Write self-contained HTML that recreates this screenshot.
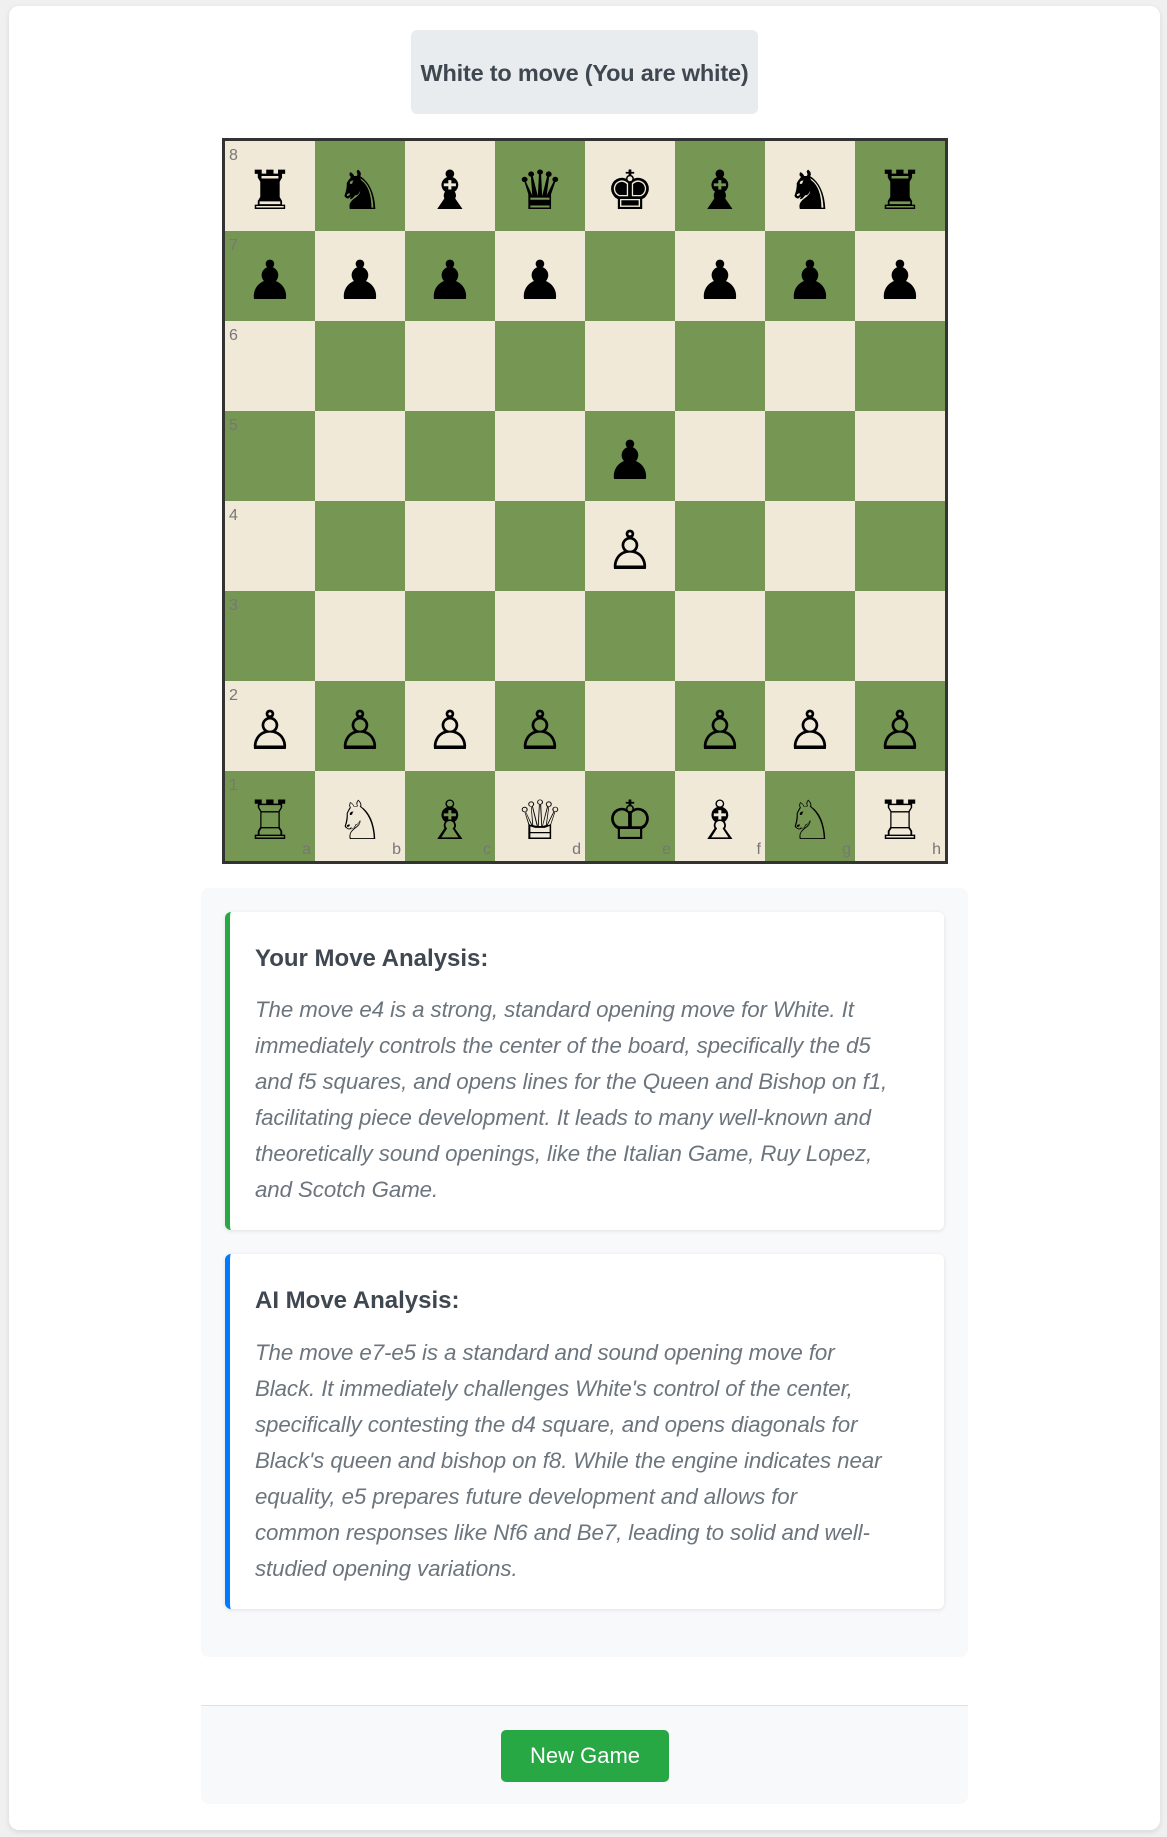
<!DOCTYPE html>
<html><head><meta charset="utf-8"><style>
*{box-sizing:border-box;margin:0;padding:0}
body{width:1167px;height:1837px;background:#f0f0f0;font-family:"Liberation Sans",sans-serif;position:relative;overflow:hidden}
.outer{position:absolute;left:9px;top:6px;width:1151px;height:1824px;background:#fff;border-radius:10px;box-shadow:0 2px 6px rgba(0,0,0,.1)}
.status{position:absolute;left:411px;top:30px;width:347px;height:84px;background:#e9ecef;border-radius:6px;color:#3f4750;font-weight:bold;font-size:23.5px;line-height:86px;text-align:center;white-space:nowrap;letter-spacing:-0.2px}
.board{position:absolute;left:222px;top:138px;width:726px;height:726px;border:3px solid #333;display:grid;grid-template-columns:repeat(8,90px);grid-template-rows:repeat(8,90px)}
.sq{position:relative;font-family:"DejaVu Sans",sans-serif;font-size:54px;line-height:100px;text-align:center;color:#000}
.l{background:#f0e9d8}.d{background:#769654}
.r{position:absolute;left:4px;top:6px;font-family:"Liberation Sans",sans-serif;font-size:16px;line-height:18px;color:#777}
.f{position:absolute;right:4px;bottom:2px;font-family:"Liberation Sans",sans-serif;font-size:16px;line-height:18px;color:#777}
.sec{position:absolute;left:201px;top:888px;width:767px;height:769px;background:#f8f9fa;border-radius:8px}
.card{position:absolute;left:225px;width:719px;background:#fff;border-radius:6px;box-shadow:0 1px 4px rgba(0,0,0,.1)}
.card h3{position:absolute;left:25px;font-size:24px;color:#3f4750;font-weight:bold}
.card p{position:absolute;left:25px;font-style:italic;font-size:22.3px;line-height:36px;color:#6c757d;white-space:nowrap;letter-spacing:-0.1px}
.foot{position:absolute;left:201px;top:1705px;width:767px;height:99px;background:#f8f9fa;border-top:1px solid #dee2e6;border-radius:0 0 8px 8px}
.btn{position:absolute;left:501px;top:1730px;width:168px;height:52px;background:#28a745;border-radius:5px;color:#fff;font-size:22px;line-height:52px;text-align:center}
</style></head><body>
<div class="outer"></div>
<div class="status">White to move (You are white)</div>
<div class="board">
<div class="sq l">♜<span class="r">8</span></div><div class="sq d">♞</div><div class="sq l">♝</div><div class="sq d">♛</div><div class="sq l">♚</div><div class="sq d">♝</div><div class="sq l">♞</div><div class="sq d">♜</div>
<div class="sq d">♟<span class="r">7</span></div><div class="sq l">♟</div><div class="sq d">♟</div><div class="sq l">♟</div><div class="sq d"></div><div class="sq l">♟</div><div class="sq d">♟</div><div class="sq l">♟</div>
<div class="sq l"><span class="r">6</span></div><div class="sq d"></div><div class="sq l"></div><div class="sq d"></div><div class="sq l"></div><div class="sq d"></div><div class="sq l"></div><div class="sq d"></div>
<div class="sq d"><span class="r">5</span></div><div class="sq l"></div><div class="sq d"></div><div class="sq l"></div><div class="sq d">♟</div><div class="sq l"></div><div class="sq d"></div><div class="sq l"></div>
<div class="sq l"><span class="r">4</span></div><div class="sq d"></div><div class="sq l"></div><div class="sq d"></div><div class="sq l">♙</div><div class="sq d"></div><div class="sq l"></div><div class="sq d"></div>
<div class="sq d"><span class="r">3</span></div><div class="sq l"></div><div class="sq d"></div><div class="sq l"></div><div class="sq d"></div><div class="sq l"></div><div class="sq d"></div><div class="sq l"></div>
<div class="sq l">♙<span class="r">2</span></div><div class="sq d">♙</div><div class="sq l">♙</div><div class="sq d">♙</div><div class="sq l"></div><div class="sq d">♙</div><div class="sq l">♙</div><div class="sq d">♙</div>
<div class="sq d">♖<span class="r">1</span><span class="f">a</span></div><div class="sq l">♘<span class="f">b</span></div><div class="sq d">♗<span class="f">c</span></div><div class="sq l">♕<span class="f">d</span></div><div class="sq d">♔<span class="f">e</span></div><div class="sq l">♗<span class="f">f</span></div><div class="sq d">♘<span class="f">g</span></div><div class="sq l">♖<span class="f">h</span></div>
</div>
<div class="sec"></div>
<div class="card" style="top:912px;height:318px;border-left:5px solid #28a745">
<h3 style="top:33px">Your Move Analysis:</h3>
<p style="top:80px">The move e4 is a strong, standard opening move for White. It<br>immediately controls the center of the board, specifically the d5<br>and f5 squares, and opens lines for the Queen and Bishop on f1,<br>facilitating piece development. It leads to many well-known and<br>theoretically sound openings, like the Italian Game, Ruy Lopez,<br>and Scotch Game.</p>
</div>
<div class="card" style="top:1254px;height:355px;border-left:5px solid #007bff">
<h3 style="top:33px">AI Move Analysis:</h3>
<p style="top:81px">The move e7-e5 is a standard and sound opening move for<br>Black. It immediately challenges White's control of the center,<br>specifically contesting the d4 square, and opens diagonals for<br>Black's queen and bishop on f8. While the engine indicates near<br>equality, e5 prepares future development and allows for<br>common responses like Nf6 and Be7, leading to solid and well-<br>studied opening variations.</p>
</div>
<div class="foot"></div>
<div class="btn">New Game</div>
</body></html>
